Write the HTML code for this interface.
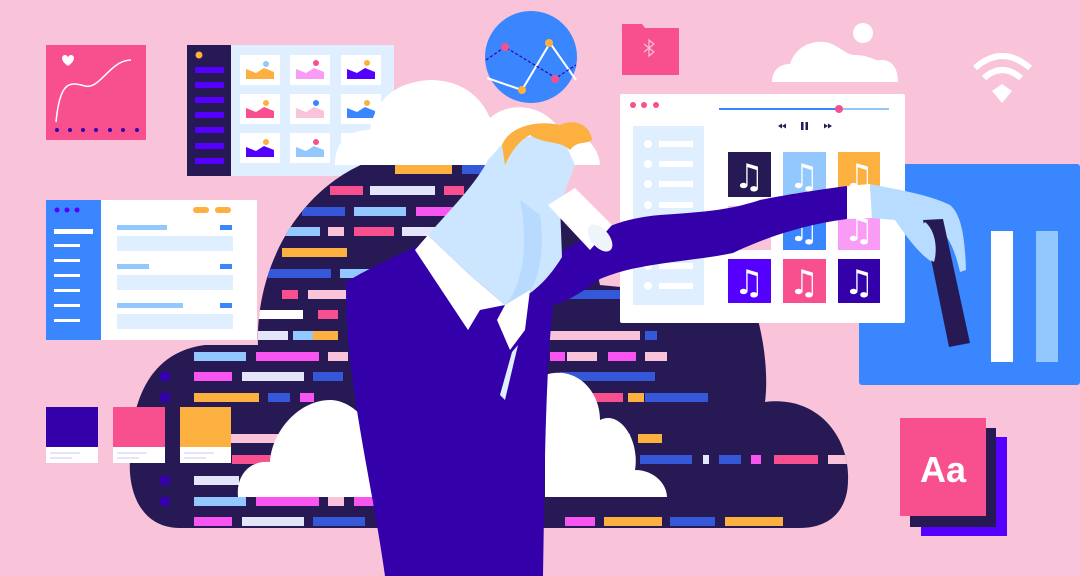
<!DOCTYPE html>
<html><head><meta charset="utf-8"><style>
html,body{margin:0;padding:0;background:#f9c3d9;}
svg{display:block}
</style></head><body>
<svg width="1080" height="576" viewBox="0 0 1080 576" xmlns="http://www.w3.org/2000/svg">
<defs>
<clipPath id="cc"><path d="M180,528 C140,528 128,490 130,460 C130,400 150,352 205,345 L258,345 C255,250 320,150 430,150 C520,150 585,210 600,285 L752,300 C766,340 768,380 765,402 C820,395 850,440 848,480 C848,510 830,528 800,528 Z"/></clipPath>
</defs>
<rect width="1080" height="576" fill="#f9c3d9"/>

<!-- heart card -->
<rect x="46" y="45" width="100" height="95" fill="#f8508f"/>
<path d="M62,58 a3,3 0 0 1 6,0 a3,3 0 0 1 6,0 q0,4 -6,8 q-6,-4 -6,-8z" fill="#fff"/>
<path d="M56,122 C60,80 70,82 85,86 C100,90 110,60 131,60" stroke="#fff" stroke-width="1.5" fill="none"/>
<g fill="#3300aa"><circle cx="57" cy="130" r="2"/><circle cx="70" cy="130" r="2"/><circle cx="83" cy="130" r="2"/><circle cx="96" cy="130" r="2"/><circle cx="110" cy="130" r="2"/><circle cx="123" cy="130" r="2"/><circle cx="137" cy="130" r="2"/></g>

<!-- gallery -->
<rect x="187" y="45" width="44" height="131" fill="#271a54"/>
<rect x="231" y="45" width="163" height="131" fill="#e0efff"/>
<circle cx="199" cy="55" r="3.5" fill="#fbb040"/>
<g fill="#5500ff"><rect x="195" y="67" width="29" height="6"/><rect x="195" y="82" width="29" height="6"/><rect x="195" y="97" width="29" height="6"/><rect x="195" y="112" width="29" height="6"/><rect x="195" y="127" width="29" height="6"/><rect x="195" y="143" width="29" height="6"/><rect x="195" y="158" width="29" height="6"/></g>
<g fill="#fff"><rect x="240" y="55" width="40" height="30"/><rect x="290" y="55" width="40" height="30"/><rect x="341" y="55" width="40" height="30"/><rect x="240" y="94" width="40" height="30"/><rect x="290" y="94" width="40" height="30"/><rect x="341" y="94" width="40" height="30"/><rect x="240" y="133" width="40" height="30"/><rect x="290" y="133" width="40" height="30"/><rect x="341" y="133" width="40" height="30"/></g>
<path d="M246,79 v-10 l10,4 l8,-5 l10,4 v7z" fill="#fbb040"/><circle cx="266" cy="64" r="3" fill="#93c8ff"/>
<path d="M296,79 v-10 l10,4 l8,-5 l10,4 v7z" fill="#f89cf5"/><circle cx="316" cy="63" r="3" fill="#f8508f"/>
<path d="M347,79 v-10 l10,4 l8,-5 l10,4 v7z" fill="#5500ff"/><circle cx="367" cy="63" r="3" fill="#fbb040"/>
<path d="M246,118 v-10 l10,4 l8,-5 l10,4 v7z" fill="#f8508f"/><circle cx="266" cy="103" r="3" fill="#fbb040"/>
<path d="M296,118 v-10 l10,4 l8,-5 l10,4 v7z" fill="#f9c3d9"/><circle cx="316" cy="103" r="3" fill="#3a86ff"/>
<path d="M347,118 v-10 l10,4 l8,-5 l10,4 v7z" fill="#3a86ff"/><circle cx="367" cy="103" r="3" fill="#fbb040"/>
<path d="M246,157 v-10 l10,4 l8,-5 l10,4 v7z" fill="#5500ff"/><circle cx="266" cy="142" r="3" fill="#fbb040"/>
<path d="M296,157 v-10 l10,4 l8,-5 l10,4 v7z" fill="#93c8ff"/><circle cx="316" cy="142" r="3" fill="#f8508f"/>

<!-- chart circle -->
<circle cx="531" cy="57" r="46" fill="#3a86ff"/>
<path d="M487,78 L522,90 L550,43 L576,80" stroke="#fff" stroke-width="2" fill="none"/>
<path d="M486,60 L505,47 L556,78 L576,65" stroke="#3300aa" stroke-width="1.2" stroke-dasharray="3,2" fill="none"/>
<circle cx="505" cy="47" r="4" fill="#f8508f"/><circle cx="549" cy="43" r="4" fill="#fbb040"/><circle cx="522" cy="90" r="4" fill="#fbb040"/><circle cx="555" cy="79" r="4" fill="#f8508f"/>

<!-- form window -->
<rect x="46" y="200" width="211" height="140" fill="#fff"/>
<rect x="46" y="200" width="55" height="140" fill="#3a86ff"/>
<g fill="#5500ff"><circle cx="57" cy="210" r="2.5"/><circle cx="67" cy="210" r="2.5"/><circle cx="77" cy="210" r="2.5"/></g>
<g fill="#fff"><rect x="54" y="229" width="39" height="5"/><rect x="54" y="244" width="26" height="3"/><rect x="54" y="259" width="26" height="3"/><rect x="54" y="274" width="26" height="3"/><rect x="54" y="289" width="26" height="3"/><rect x="54" y="304" width="26" height="3"/><rect x="54" y="319" width="26" height="3"/></g>
<rect x="193" y="207" width="16" height="6" rx="3" fill="#fbb040"/><rect x="215" y="207" width="16" height="6" rx="3" fill="#fbb040"/>
<g fill="#93c8ff"><rect x="117" y="225" width="50" height="5"/><rect x="117" y="264" width="32" height="5"/><rect x="117" y="303" width="66" height="5"/></g>
<g fill="#3a86ff"><rect x="220" y="225" width="12" height="5"/><rect x="220" y="264" width="12" height="5"/><rect x="220" y="303" width="12" height="5"/></g>
<g fill="#e0efff"><rect x="117" y="236" width="116" height="15"/><rect x="117" y="275" width="116" height="15"/><rect x="117" y="314" width="116" height="15"/></g>

<!-- dark cloud with code -->
<path d="M180,528 C140,528 128,490 130,460 C130,400 150,352 205,345 L258,345 C255,250 320,150 430,150 C520,150 585,210 600,285 L752,300 C766,340 768,380 765,402 C820,395 850,440 848,480 C848,510 830,528 800,528 Z" fill="#271a54"/>
<g clip-path="url(#cc)">
<g transform="translate(0,0)">
<rect x="395" y="165" width="57" height="9" fill="#fbb040"/><rect x="462" y="165" width="40" height="9" fill="#3558d8"/>
<rect x="330" y="186" width="33" height="9" fill="#f8508f"/><rect x="370" y="186" width="65" height="9" fill="#e3e6fb"/><rect x="444" y="186" width="20" height="9" fill="#f8508f"/>
<rect x="302" y="207" width="43" height="9" fill="#3558d8"/><rect x="354" y="207" width="52" height="9" fill="#93c8ff"/><rect x="416" y="207" width="40" height="9" fill="#f855f0"/>
<rect x="268" y="227" width="52" height="9" fill="#93c8ff"/><rect x="328" y="227" width="16" height="9" fill="#f9c3d9"/><rect x="354" y="227" width="40" height="9" fill="#f8508f"/><rect x="402" y="227" width="40" height="9" fill="#e3e6fb"/>
<rect x="282" y="248" width="65" height="9" fill="#fbb040"/>
<rect x="268" y="269" width="63" height="9" fill="#3558d8"/><rect x="340" y="269" width="40" height="9" fill="#93c8ff"/>
<rect x="282" y="290" width="16" height="9" fill="#f8508f"/><rect x="308" y="290" width="40" height="9" fill="#f9c3d9"/><rect x="560" y="290" width="100" height="9" fill="#3558d8"/>
<rect x="258" y="310" width="45" height="9" fill="#fff"/><rect x="318" y="310" width="20" height="9" fill="#f8508f"/>
<rect x="258" y="331" width="30" height="9" fill="#e3e6fb"/><rect x="293" y="331" width="20" height="9" fill="#93c8ff"/><rect x="313" y="331" width="25" height="9" fill="#fbb040"/><rect x="550" y="331" width="90" height="9" fill="#f9c3d9"/><rect x="645" y="331" width="12" height="9" fill="#3558d8"/>
<rect x="194" y="352" width="52" height="9" fill="#93c8ff"/><rect x="256" y="352" width="63" height="9" fill="#f855f0"/><rect x="328" y="352" width="20" height="9" fill="#f9c3d9"/><rect x="550" y="352" width="15" height="9" fill="#f855f0"/><rect x="567" y="352" width="30" height="9" fill="#f9c3d9"/><rect x="608" y="352" width="28" height="9" fill="#f855f0"/><rect x="645" y="352" width="22" height="9" fill="#f9c3d9"/>
<rect x="160" y="372" width="10" height="9" fill="#3300aa"/><rect x="194" y="372" width="38" height="9" fill="#f855f0"/><rect x="242" y="372" width="62" height="9" fill="#e3e6fb"/><rect x="313" y="372" width="30" height="9" fill="#3558d8"/><rect x="560" y="372" width="95" height="9" fill="#3558d8"/>
<rect x="160" y="393" width="10" height="9" fill="#3300aa"/><rect x="194" y="393" width="65" height="9" fill="#fbb040"/><rect x="268" y="393" width="22" height="9" fill="#3558d8"/><rect x="300" y="393" width="14" height="9" fill="#f855f0"/><rect x="585" y="393" width="38" height="9" fill="#f8508f"/><rect x="628" y="393" width="16" height="9" fill="#fbb040"/><rect x="645" y="393" width="63" height="9" fill="#3558d8"/>
<rect x="230" y="434" width="80" height="9" fill="#f9c3d9"/><rect x="600" y="434" width="30" height="9" fill="#93c8ff"/><rect x="638" y="434" width="24" height="9" fill="#fbb040"/>
<rect x="232" y="455" width="40" height="9" fill="#f8508f"/><rect x="640" y="455" width="52" height="9" fill="#3558d8"/><rect x="703" y="455" width="6" height="9" fill="#e3e6fb"/><rect x="719" y="455" width="22" height="9" fill="#3558d8"/><rect x="751" y="455" width="10" height="9" fill="#f855f0"/><rect x="774" y="455" width="44" height="9" fill="#f8508f"/><rect x="828" y="455" width="20" height="9" fill="#f9c3d9"/>
<rect x="160" y="476" width="10" height="9" fill="#3300aa"/><rect x="194" y="476" width="45" height="9" fill="#e3e6fb"/>
<rect x="160" y="497" width="10" height="9" fill="#3300aa"/><rect x="194" y="497" width="52" height="9" fill="#93c8ff"/><rect x="256" y="497" width="63" height="9" fill="#f855f0"/><rect x="328" y="497" width="16" height="9" fill="#f9c3d9"/><rect x="354" y="497" width="20" height="9" fill="#f855f0"/>
<rect x="194" y="517" width="38" height="9" fill="#f855f0"/><rect x="242" y="517" width="62" height="9" fill="#e3e6fb"/><rect x="313" y="517" width="52" height="9" fill="#3558d8"/><rect x="565" y="517" width="30" height="9" fill="#f855f0"/><rect x="605" y="517" width="30" height="9" fill="#f9c3d9"/><rect x="604" y="517" width="58" height="9" fill="#fbb040"/><rect x="670" y="517" width="45" height="9" fill="#3558d8"/><rect x="725" y="517" width="58" height="9" fill="#fbb040"/>
</g></g>

<!-- swatches -->
<rect x="46" y="407" width="52" height="56" fill="#fff"/><rect x="46" y="407" width="52" height="40" fill="#3300aa"/>
<rect x="113" y="407" width="52" height="56" fill="#fff"/><rect x="113" y="407" width="52" height="40" fill="#f8508f"/>
<rect x="180" y="407" width="51" height="56" fill="#fff"/><rect x="180" y="407" width="51" height="40" fill="#fbb040"/>
<g fill="#e3e6fb"><rect x="50" y="452" width="30" height="2"/><rect x="50" y="457" width="22" height="2"/><rect x="117" y="452" width="30" height="2"/><rect x="117" y="457" width="22" height="2"/><rect x="184" y="452" width="30" height="2"/><rect x="184" y="457" width="22" height="2"/></g>

<!-- white bottom clouds -->
<path d="M238,497 C236,475 250,460 270,462 C272,430 300,400 330,400 C350,400 372,420 375,445 L375,497Z" fill="#fff"/>
<path d="M545,497 L545,375 C575,365 600,390 600,420 C620,410 640,440 635,470 C655,470 667,485 667,497Z" fill="#fff"/>

<!-- top cloud -->
<path d="M335,165 C335,140 350,130 370,130 C375,100 395,82 430,80 C460,80 480,95 490,118 C510,100 545,105 560,130 C585,130 600,150 600,165Z" fill="#fff"/>

<!-- bluetooth folder -->
<path d="M622,24 h20 l3,4 h34 v47 h-57z" fill="#f8508f"/>
<path d="M644,44 l10,8 l-5,4 v-16 l5,4 l-10,8" stroke="#f9c3d9" stroke-width="1.2" fill="none"/>

<!-- top right cloud, wifi -->
<circle cx="863" cy="33" r="10" fill="#fff"/>
<path d="M772,82 C772,70 780,64 790,64 C795,48 810,40 825,42 C838,44 845,55 855,55 C870,55 875,62 882,60 C893,60 898,70 898,82Z" fill="#fff"/>
<g fill="none" stroke="#fff" stroke-width="6"><path d="M975,68 Q1002,44 1030,68"/><path d="M984,78 Q1002,62 1021,78"/></g>
<path d="M992,91 L1002,84 L1012,91 L1002,103Z" fill="#fff"/>

<!-- blue chart panel -->
<rect x="859" y="164" width="221" height="221" rx="3" fill="#3a86ff"/>
<rect x="991" y="231" width="22" height="131" fill="#fff"/>
<rect x="1036" y="231" width="22" height="131" fill="#93c8ff"/>

<!-- music window -->
<rect x="620" y="94" width="285" height="229" rx="2" fill="#fff"/>
<g fill="#f8508f"><circle cx="633" cy="105" r="3"/><circle cx="644" cy="105" r="3"/><circle cx="656" cy="105" r="3"/></g>
<rect x="719" y="108" width="170" height="2" fill="#93c8ff"/><rect x="719" y="108" width="120" height="2" fill="#3a86ff"/><circle cx="839" cy="109" r="4" fill="#f8508f"/>
<g fill="#271a54"><rect x="801" y="122" width="2.5" height="8"/><rect x="805.5" y="122" width="2.5" height="8"/><path d="M778,126 l4,-2.5 v5z M782,126 l4,-2.5 v5z M828,126 l-4,-2.5 v5z M832,126 l-4,-2.5 v5z"/></g>
<rect x="633" y="126" width="71" height="179" fill="#e0efff"/>
<g fill="#fff"><circle cx="648" cy="144" r="4"/><rect x="659" y="141" width="34" height="6"/><circle cx="648" cy="164" r="4"/><rect x="659" y="161" width="34" height="6"/><circle cx="648" cy="184" r="4"/><rect x="659" y="181" width="34" height="6"/><circle cx="648" cy="205" r="4"/><rect x="659" y="202" width="34" height="6"/><circle cx="648" cy="225" r="4"/><rect x="659" y="222" width="34" height="6"/><circle cx="648" cy="266" r="4"/><rect x="659" y="263" width="34" height="6"/><circle cx="648" cy="286" r="4"/><rect x="659" y="283" width="34" height="6"/></g>
<rect x="728" y="152" width="43" height="45" fill="#271a54"/><rect x="783" y="152" width="43" height="45" fill="#93c8ff"/><rect x="838" y="152" width="42" height="45" fill="#fbb040"/>
<rect x="728" y="206" width="43" height="44" fill="#f9c3d9"/><rect x="783" y="206" width="43" height="44" fill="#3a86ff"/><rect x="838" y="206" width="42" height="44" fill="#f89cf5"/>
<rect x="728" y="259" width="43" height="44" fill="#5500ff"/><rect x="783" y="259" width="43" height="44" fill="#f8508f"/><rect x="838" y="259" width="42" height="44" fill="#3300aa"/>
<g font-family="DejaVu Sans, sans-serif" font-size="34" fill="#fff" text-anchor="middle">
<text x="749" y="188">♫</text><text x="804" y="188">♫</text><text x="859" y="188">♫</text>
<text x="804" y="241">♫</text><text x="859" y="241">♫</text>
<text x="749" y="294">♫</text><text x="804" y="294">♫</text><text x="859" y="294">♫</text>
</g>

<!-- Aa cards -->
<rect x="921" y="437" width="86" height="99" fill="#5500ff"/>
<rect x="910" y="428" width="86" height="99" fill="#271a54"/>
<rect x="900" y="418" width="86" height="98" fill="#f8508f"/>
<text x="943" y="482" font-family="Liberation Sans, sans-serif" font-weight="bold" font-size="36" fill="#fff" text-anchor="middle">Aa</text>

<!-- person body -->
<path d="M346,282 C380,262 410,250 430,240 L500,235 L560,262 C545,330 545,460 543,576 L385,576 C370,470 345,380 346,282Z" fill="#3300aa"/>
<!-- arm -->
<path d="M540,262 C580,245 600,220 660,215 C700,212 727,211 760,200 C800,192 847,186 847,186 L847,219 C800,225 760,240 733,253 C690,262 640,262 600,279 C585,290 570,300 555,305Z" fill="#3300aa"/>
<!-- cuff & hand -->
<path d="M847,186 L870,184 L872,218 L847,219Z" fill="#fff"/>
<path d="M870,184 C900,190 930,195 950,205 C962,215 965,240 966,270 L960,272 C955,250 948,235 940,230 L925,228 C930,245 935,255 932,262 C920,255 905,235 895,220 L872,218Z" fill="#b8dcff"/>
<path d="M923,220 L943,219 L970,343 L949,347Z" fill="#271a54"/>
<path d="M925,222 C935,230 938,248 934,262 C926,258 918,245 915,235Z" fill="#b8dcff"/>
<!-- head -->
<path d="M488,160 L506,140 L560,132 L575,165 L560,205 L562,257 C545,285 525,300 505,305 L470,275 L428,235 C450,210 475,185 488,160Z" fill="#cce6ff"/>
<path d="M505,305 C520,290 530,250 520,200 L540,215 C545,250 540,280 525,300Z" fill="#b0d4ff" opacity="0.7"/>
<path d="M502,145 C510,125 540,120 560,125 C575,118 590,125 592,140 C585,145 578,140 570,150 C560,140 545,145 530,135 C520,140 512,150 505,165Z" fill="#fbb040"/>
<!-- cup -->
<path d="M548,205 L575,188 L612,225 L590,250Z" fill="#fff"/>
<ellipse cx="600" cy="238" rx="9" ry="16" transform="rotate(-40 600 238)" fill="#eef4fa"/>
<!-- collar -->
<path d="M415,250 L428,235 L470,275 L505,305 L480,310 L468,330 Z" fill="#fff"/>
<path d="M505,305 L530,290 L525,330 L510,350 L497,320Z" fill="#fff"/>
<path d="M512,352 L518,345 L505,400 L500,395Z" fill="#e0efff"/>
</svg>
</body></html>
